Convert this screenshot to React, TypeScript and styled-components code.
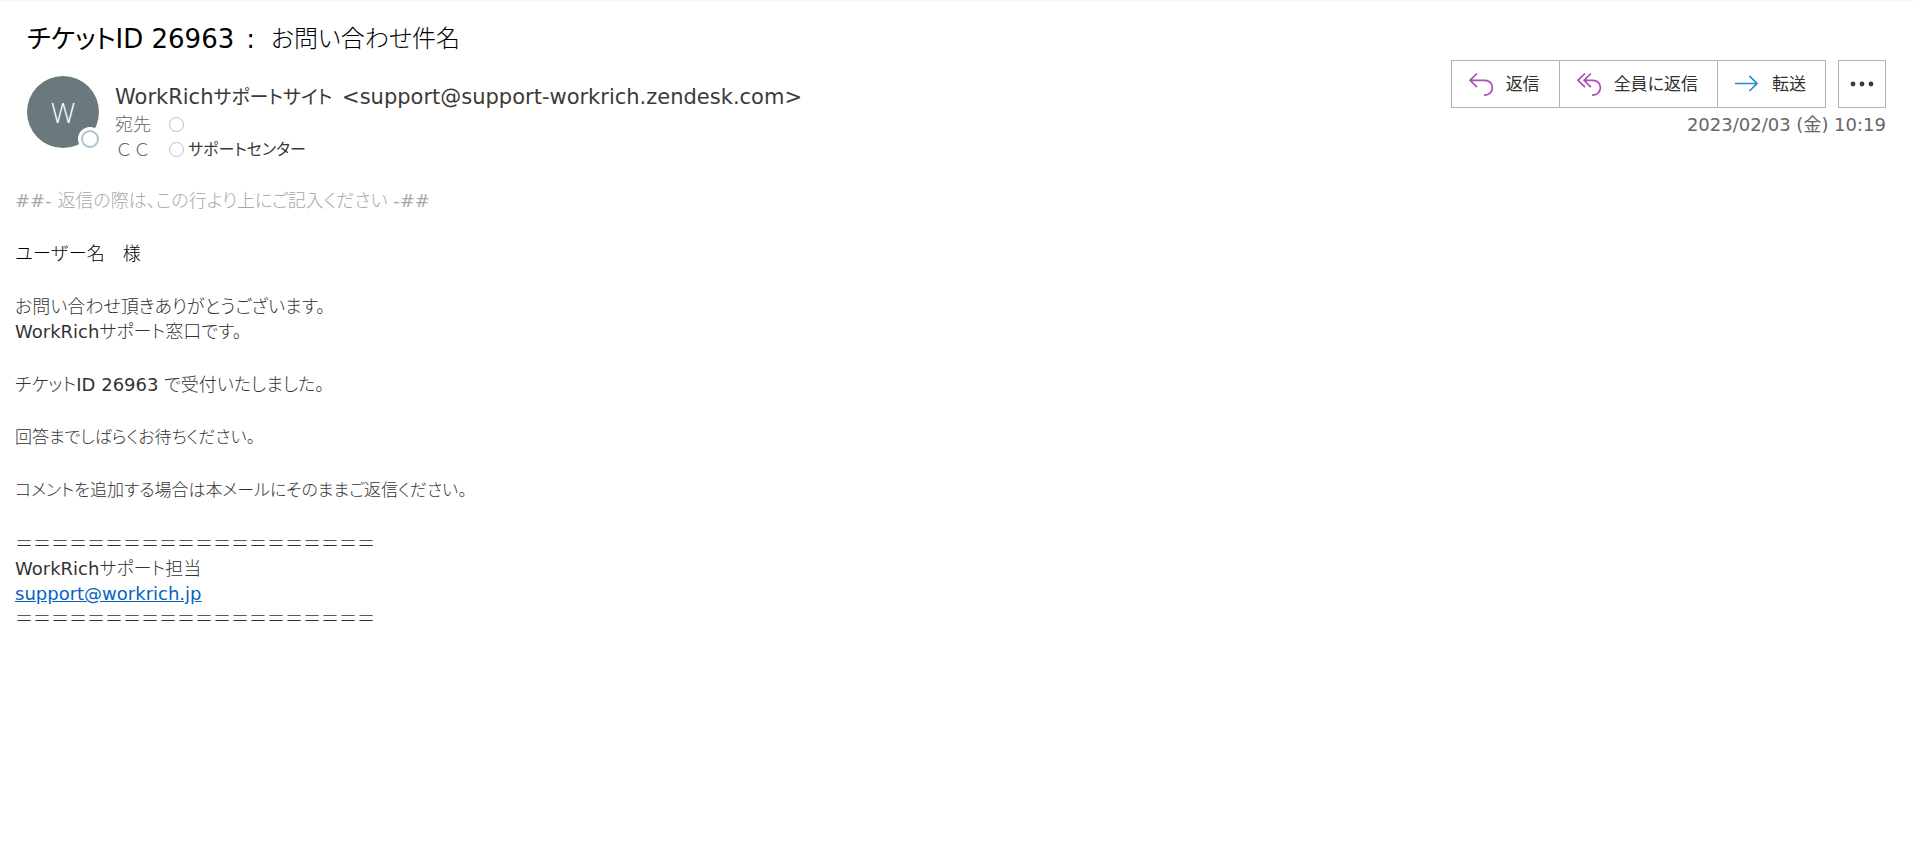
import React from "react";
import styled, { createGlobalStyle } from "styled-components";

const regularFont = `"DejaVu Sans", "Noto Sans CJK JP", sans-serif`;
const lightFont = `"DejaVu Sans", "Noto Sans CJK JP Light", "Noto Sans CJK JP", sans-serif`;

const GlobalStyle = createGlobalStyle`
  *, *::before, *::after { box-sizing: border-box; }
  body {
    margin: 0;
    background: #fff;
    color: #3b3a39;
    font-family: ${regularFont};
    font-size: 18px;
    line-height: 25px;
    font-feature-settings: "palt";
  }
`;

const Page = styled.main`
  border-top: 1px solid #f8f8f8;
  padding-bottom: 24px;
`;

const Subject = styled.h1`
  display: flex;
  align-items: center;
  margin: 0;
  padding: 21px 27px 0;
  font-size: 26px;
  line-height: 34px;
  font-weight: 400;
  color: #000;
`;

const Colon = styled.span`
  margin: 0 16px 0 12px;
`;

const SubjectName = styled.span`
  font-family: ${lightFont};
  font-size: 24px;
`;

const Header = styled.header`
  display: flex;
  align-items: flex-start;
  justify-content: space-between;
  padding: 4px 30px 0 27px;
`;

const Sender = styled.div`
  display: flex;
  gap: 16px;
  padding-top: 16px;
`;

const Avatar = styled.div`
  position: relative;
  display: flex;
  align-items: center;
  justify-content: center;
  width: 72px;
  height: 72px;
  border-radius: 50%;
  background: #69797e;
  color: #fff;
  font-family: "Open Sans", sans-serif;
  font-size: 27px;
  font-weight: 300;
`;

const Presence = styled.span`
  position: absolute;
  right: -3px;
  bottom: -3px;
  width: 24px;
  height: 24px;
  border: 3px solid #fff;
  border-radius: 50%;
  background: #fff;

  &::after {
    content: "";
    display: block;
    height: 100%;
    border: 2px solid #a9c4d0;
    border-radius: 50%;
  }
`;

const SenderName = styled.div`
  padding-top: 7px;
  font-size: 21px;
  line-height: 28px;
`;

const SenderKana = styled.span`
  margin-right: 3px;
  font-size: 19px;
`;

const Recipients = styled.dl`
  display: grid;
  grid-template-columns: 54px auto;
  margin: 1px 0 0;
`;

const RecipientLabel = styled.dt`
  color: #666;
  font-family: ${lightFont};
  font-feature-settings: normal;
`;

const RecipientValue = styled.dd`
  display: flex;
  align-items: center;
  gap: 4px;
  margin: 0;
  font-size: 16px;
`;

const Status = styled.span`
  width: 15px;
  height: 15px;
  border: 1px solid #a9c4d0;
  border-radius: 50%;
`;

const Side = styled.div`
  display: flex;
  flex-direction: column;
  align-items: flex-end;
`;

const Toolbar = styled.div`
  display: flex;
  gap: 12px;
`;

const ButtonGroup = styled.div`
  display: flex;
`;

const Action = styled.button`
  display: flex;
  align-items: center;
  justify-content: center;
  gap: 12px;
  height: 48px;
  margin: 0;
  padding: 0 19px 0 17px;
  border: 1px solid #b3b0ad;
  background: #fff;
  color: #323130;
  font: inherit;
  font-size: 17px;
  font-feature-settings: inherit;

  & + & {
    margin-left: -1px;
  }
`;

const MoreButton = styled(Action)`
  width: 48px;
  padding: 0;
`;

const Sent = styled.time`
  margin-top: 4px;
  color: #666;
`;

const Body = styled.article`
  padding: 26px 15px 0;
  color: #333;
  font-family: ${lightFont};
`;

const Paragraph = styled.p<{ $color?: string; $fullWidth?: boolean; $compact?: boolean }>`
  margin: 0 0 28px;
  color: ${(p) => p.$color ?? "inherit"};
  font-size: ${(p) => (p.$compact ? "17px" : "18px")};
  font-feature-settings: ${(p) => (p.$fullWidth ? "normal" : "inherit")};
`;

const Rule = styled.span`
  font-feature-settings: normal;
`;

const MailLink = styled.a`
  color: #0563c1;
  text-decoration: underline;
`;

const stroke = { fill: "none", strokeWidth: 1.7 } as const;

const ReplyIcon = () => (
  <svg width="25" height="25" viewBox="0 0 25 25" stroke="#a94fb5" {...stroke}>
    <path d="M8 1.5 1 8.3l7 6.8M1 8.3H16a7.4 7.4 0 0 1 0 14.8H15" />
  </svg>
);

const ReplyAllIcon = () => (
  <svg width="25" height="25" viewBox="0 0 25 25" stroke="#a94fb5" {...stroke}>
    <path d="M8 1.5 1 8.3l7 6.8M14 1.5 7 8.3l7 6.8M7 8.3h9a7.4 7.4 0 0 1 0 14.8H15" />
  </svg>
);

const ForwardIcon = () => (
  <svg width="25" height="25" viewBox="0 0 25 25" stroke="#1e8bcd" {...stroke}>
    <path d="M0 11.5h22M14.5 4l7.5 7.5-7.5 7.5" />
  </svg>
);

const MoreIcon = () => (
  <svg width="24" height="6" viewBox="0 0 24 6" fill="#3b3a39">
    <circle cx="3" cy="3" r="2.4" />
    <circle cx="12" cy="3" r="2.4" />
    <circle cx="21" cy="3" r="2.4" />
  </svg>
);

const RULE = "＝".repeat(20);

export default function App() {
  return (
    <>
      <GlobalStyle />
      <Page lang="ja">
        <Subject>
          <span>チケットID 26963</span>
          <Colon>:</Colon>
          <SubjectName>お問い合わせ件名</SubjectName>
        </Subject>
        <Header>
          <Sender>
            <Avatar>
              W
              <Presence />
            </Avatar>
            <div>
              <SenderName>
                WorkRich<SenderKana>サポートサイト</SenderKana>{" "}
                &lt;support@support-workrich.zendesk.com&gt;
              </SenderName>
              <Recipients>
                <RecipientLabel>宛先</RecipientLabel>
                <RecipientValue>
                  <Status />
                </RecipientValue>
                <RecipientLabel>ＣＣ</RecipientLabel>
                <RecipientValue>
                  <Status />
                  サポートセンター
                </RecipientValue>
              </Recipients>
            </div>
          </Sender>
          <Side>
            <Toolbar>
              <ButtonGroup>
                <Action type="button">
                  <ReplyIcon />
                  返信
                </Action>
                <Action type="button">
                  <ReplyAllIcon />
                  全員に返信
                </Action>
                <Action type="button">
                  <ForwardIcon />
                  転送
                </Action>
              </ButtonGroup>
              <MoreButton type="button" aria-label="その他">
                <MoreIcon />
              </MoreButton>
            </Toolbar>
            <Sent dateTime="2023-02-03T10:19">2023/02/03 (金) 10:19</Sent>
          </Side>
        </Header>
        <Body>
          <Paragraph $color="#a8a8a8">
            ##- 返信の際は、この行より上にご記入ください -##
          </Paragraph>
          <Paragraph $color="#000" $fullWidth>
            ユーザー名　様
          </Paragraph>
          <Paragraph>
            お問い合わせ頂きありがとうございます。
            <br />
            WorkRichサポート窓口です。
          </Paragraph>
          <Paragraph>チケットID 26963 で受付いたしました。</Paragraph>
          <Paragraph $compact>回答までしばらくお待ちください。</Paragraph>
          <Paragraph $compact>
            コメントを追加する場合は本メールにそのままご返信ください。
          </Paragraph>
          <Paragraph>
            <Rule>{RULE}</Rule>
            <br />
            WorkRichサポート担当
            <br />
            <MailLink href="mailto:support@workrich.jp">support@workrich.jp</MailLink>
            <br />
            <Rule>{RULE}</Rule>
          </Paragraph>
        </Body>
      </Page>
    </>
  );
}
